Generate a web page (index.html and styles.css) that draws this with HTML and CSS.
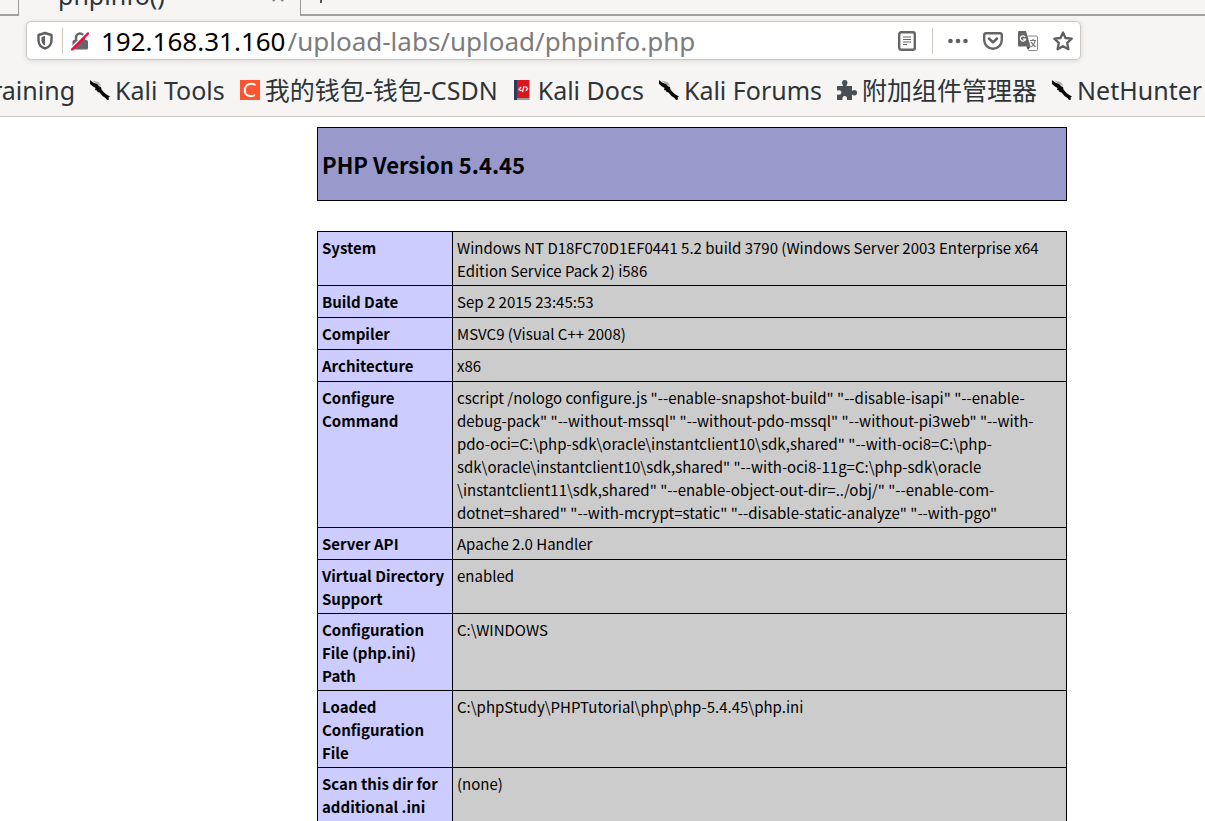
FILE: index.html
```html
<!DOCTYPE html>
<html lang="en">
<head>
<meta charset="utf-8">
<title>phpinfo()</title>
<link rel="stylesheet" href="styles.css">
</head>
<body>
<svg class="defs" aria-hidden="true">
  <symbol id="kali" viewBox="0 0 20 20">
    <path fill="#b5b5b5" d="M2 0.500 9 2 11.500 6 8 5Z"/>
    <path fill="#080808" d="M0 0 3 2.500 7 4 9.500 6.500 11 7 11.500 9.500 14 12.500 16.500 14.500 20 16.500 18.500 17.500 19 19.500 17 20 15.500 18 12.500 16 9.500 12.500 7.500 12 7 10.500 5 10 5.500 8 3 6.500 0 4Z"/>
  </symbol>
</svg>
<header class="browser">
  <div class="tabs">
    <div class="tab-edge"></div>
    <div class="tab"><span>phpinfo()</span>
      <button class="tab-close" aria-label="Close tab"><svg width="12" height="12" viewBox="0 0 12 12"><path d="M1 1 11 11M11 1 1 11" stroke="#777" stroke-width="2"/></svg></button>
    </div>
    <div class="tab-rest"><button class="tab-new" aria-label="New tab"><svg width="16" height="16" viewBox="0 0 16 16"><path d="M8 0V16M0 8H16" stroke="#555" stroke-width="2"/></svg></button></div>
  </div>
  <div class="urlbar">
    <button aria-label="Tracking protection"><svg width="18" height="20" viewBox="0 0 18 20"><path d="M9 2 15.500 4V9C15.500 13.500 12.500 16.500 9 17.500 5.500 16.500 2.500 13.500 2.500 9V4Z" fill="none" stroke="#5f5f5f" stroke-width="2.400" stroke-linejoin="round"/><path d="M9 5 5.500 6V9.500C5.500 12 7 13.500 9 14.500Z" fill="#5f5f5f"/></svg></button>
    <span class="divider"></span>
    <button aria-label="Connection is not secure"><svg width="18" height="20" viewBox="0 0 18 20"><path d="M5 10V6.500A4 4 0 0 1 13 6.500V10" fill="none" stroke="#666" stroke-width="2.500"/><rect x="1.500" y="9" width="15.500" height="9.500" rx="1.500" fill="#666"/><path d="M0 17.500 15.500 2" stroke="#fff" stroke-width="2"/><path d="M1 18.500 17 2.500" stroke="#ff0039" stroke-width="2.400" stroke-linecap="round"/></svg></button>
    <label class="host" for="url">192.168.31.160</label>
    <input id="url" class="path" type="text" value="/upload-labs/upload/phpinfo.php">
    <div class="actions">
      <button aria-label="Reader view"><svg width="20" height="22" viewBox="0 0 20 22"><rect x="2.200" y="2.200" width="15.600" height="17.600" rx="2" fill="none" stroke="#666" stroke-width="2.400"/><path d="M6 7H14M6 9.500H14M6 12H14M6 14.500H10" stroke="#666" stroke-width="1.200"/></svg></button>
      <span class="divider"></span>
      <button aria-label="Page actions"><svg width="20" height="20" viewBox="0 0 20 20"><g fill="#5f5f5f"><circle cx="2.500" cy="10" r="2.300"/><circle cx="10" cy="10" r="2.300"/><circle cx="17.500" cy="10" r="2.300"/></g></svg></button>
      <button aria-label="Save to Pocket"><svg width="20" height="20" viewBox="0 0 20 20"><path d="M3 2.200H17Q18.800 2.200 18.800 4V9A8.800 8.800 0 0 1 1.200 9V4Q1.200 2.200 3 2.200Z" fill="none" stroke="#666" stroke-width="2.400"/><path d="M6 7.500 10 11.300 14 7.500" fill="none" stroke="#5f5f5f" stroke-width="2.500" stroke-linecap="round" stroke-linejoin="round"/></svg></button>
      <button aria-label="Translate page"><svg width="20" height="20" viewBox="0 0 20 20"><path d="M9.500 5H18.500Q19.500 5 19.500 6V18.500Q19.500 19.500 18.500 19.500H10.500" fill="#fff" stroke="#888"/><path d="M12 9.500H18M15 8V9.500M13 11 17.500 16M17 10C16.500 13 15 15 12.500 16" fill="none" stroke="#777" stroke-width="1.200"/><path d="M1 0H8L12.500 15.500H1Q0 15.500 0 14.500V1Q0 0 1 0Z" fill="#666"/><path d="M8.500 15.500H12.500L10 19Z" fill="#444"/><path d="M7.200 6A2.600 2.600 0 1 0 7.500 8.200H5" fill="none" stroke="#fff" stroke-width="1.300"/></svg></button>
      <button aria-label="Bookmark this page"><svg width="20" height="20" viewBox="0 0 20 20"><path d="M10 1.500 12.500 7 18.700 7.700 14.200 11.900 15.400 18.200 10 15.200 4.600 18.200 5.800 11.900 1.300 7.700 7.500 7Z" fill="none" stroke="#5f5f5f" stroke-width="2.300" stroke-linejoin="round"/></svg></button>
    </div>
  </div>
  <nav class="bookmarks" aria-label="Bookmarks">
    <a href="#">raining</a>
    <a href="#"><svg width="20" height="20"><use href="#kali"/></svg>Kali Tools</a>
    <a href="#"><svg width="20" height="20" viewBox="0 0 20 20"><path fill="#fc5531" d="M0 0H20V20H0Z"/><path d="M15.500 5C11 2.500 5 4 4.800 10.500 5 16.500 11 17 15 15.200" fill="none" stroke="#fff" stroke-width="2"/></svg>我的钱包-钱包-CSDN</a>
    <a href="#"><svg width="20" height="20" viewBox="0 0 20 20"><path fill="#293a61" d="M1 0H5V20H1Z"/><path fill="#d9161b" d="M4 0H16.500V18H4Z"/><path fill="#999" d="M4 18H16.500V20H4Z"/><path d="M8 7 6 9.500 8.500 11M12.500 6.500 14.500 8.500 13 11M11 6 9.500 12" fill="none" stroke="#fff" stroke-width="1.300"/></svg>Kali Docs</a>
    <a href="#"><svg width="20" height="20"><use href="#kali"/></svg>Kali Forums</a>
    <a href="#"><svg width="20" height="20" viewBox="0 0 20 20"><path fill="#474f52" d="M0 6H6Q5.500 4.500 5 3 5 0 7.700 0 10.500 0 10.500 3 10 4.500 9.500 6H15V11Q16 10 17.500 10 20 10 20 12.800 20 15.500 17.500 15.500 16 15.500 15 14.500V20H10Q10.500 16 7.700 16 5 16 5.500 20H0V14.500Q4.500 15.500 4.500 12.500 4.500 9.500 0 10.500Z"/></svg>附加组件管理器</a>
    <a href="#"><svg width="20" height="20"><use href="#kali"/></svg>NetHunter</a>
  </nav>
</header>
<main class="page">
  <div class="content">
    <div class="banner"><h1>PHP Version 5.4.45</h1></div>
    <table class="info">
      <tbody>
      <tr><th scope="row">System</th><td>Windows NT D18FC70D1EF0441 5.2 build 3790 (Windows Server 2003 Enterprise x64 Edition Service Pack 2) i586</td></tr>
      <tr><th scope="row">Build Date</th><td>Sep 2 2015 23:45:53</td></tr>
      <tr><th scope="row">Compiler</th><td>MSVC9 (Visual C++ 2008)</td></tr>
      <tr><th scope="row">Architecture</th><td>x86</td></tr>
      <tr><th scope="row">Configure Command</th><td>cscript /nologo configure.js "--enable-snapshot-build" "--disable-isapi" "--enable-<br>debug-pack" "--without-mssql" "--without-pdo-mssql" "--without-pi3web" "--with-<br>pdo-oci=C:\php-sdk\oracle\instantclient10\sdk,shared" "--with-oci8=C:\php-<br>sdk\oracle\instantclient10\sdk,shared" "--with-oci8-11g=C:\php-sdk\oracle<br>\instantclient11\sdk,shared" "--enable-object-out-dir=../obj/" "--enable-com-<br>dotnet=shared" "--with-mcrypt=static" "--disable-static-analyze" "--with-pgo"</td></tr>
      <tr><th scope="row">Server API</th><td>Apache 2.0 Handler</td></tr>
      <tr><th scope="row">Virtual Directory Support</th><td>enabled</td></tr>
      <tr><th scope="row">Configuration File (php.ini) Path</th><td>C:\WINDOWS</td></tr>
      <tr><th scope="row">Loaded Configuration File</th><td>C:\phpStudy\PHPTutorial\php\php-5.4.45\php.ini</td></tr>
      <tr><th scope="row">Scan this dir for additional .ini files</th><td>(none)</td></tr>
      </tbody>
    </table>
  </div>
</main>
</body>
</html>
```
FILE: styles.css
```css
* { box-sizing: border-box; }
html, body { height: 100%; }
body {
  margin: 0;
  display: flex;
  flex-direction: column;
  overflow: hidden;
  background: #fff;
  color: #000;
  font-family: "Noto Sans", "Noto Sans CJK SC", sans-serif;
}
.defs { position: absolute; width: 0; height: 0; }
svg { display: block; flex: none; }
button { border: 0; padding: 0; background: none; }

.browser {
  flex: none;
  background: #f6f5f4;
  color: #2e3436;
  border-bottom: 1px solid #cdc7c2;
  font-size: 25px;
}
.tabs { display: flex; height: 16px; overflow: hidden; }
.tab-edge { width: 19px; border-right: 1px solid #999; border-bottom: 2px solid #a3a19e; }
.tab {
  width: 281px;
  display: flex;
  align-items: flex-end;
  justify-content: space-between;
  padding: 0 16px 4px 39px;
  line-height: 34px;
}
.tab-close { padding-bottom: 10px; }
.tab-rest {
  flex: 1;
  display: flex;
  align-items: flex-end;
  padding: 0 12px 11px;
  border-left: 1px solid #999;
  border-bottom: 2px solid #a3a19e;
}

.urlbar {
  display: flex;
  align-items: center;
  height: 39px;
  margin: 5px 124px 0 26px;
  padding: 0 7px 0 9px;
  background: #fff;
  border: 1px solid #cdc7c2;
  border-radius: 5px;
  box-shadow: 0 1px 5px rgba(0, 0, 0, 0.12);
  font-size: 26px;
}
.divider { width: 1px; height: 26px; margin: 0 8px; background: #cdc7c2; }
.host { margin-left: 12px; color: #000; }
.path {
  flex: 1;
  min-width: 0;
  border: 0;
  padding: 0 0 0 2px;
  background: none;
  outline: 0;
  font: inherit;
  color: #7c7c7c;
}
.actions { display: flex; align-items: center; gap: 15px; }
.actions .divider { margin: 0; }

.bookmarks {
  display: flex;
  align-items: center;
  gap: 15px;
  height: 56px;
  margin-left: -8px;
  padding-top: 4px;
  white-space: nowrap;
}
.bookmarks a {
  display: flex;
  align-items: center;
  gap: 5px;
  line-height: 36px;
  color: inherit;
  text-decoration: none;
}

.page {
  flex: 1;
  min-height: 0;
  overflow: hidden;
  padding: 10px 0 0 179px;
  font-family: "Noto Sans CJK SC", sans-serif;
  font-size: 15px;
  line-height: 23px;
}
.content { max-width: 750px; margin: 0 auto; }
.banner {
  padding: 19px 4px;
  margin-bottom: 30px;
  background: #9999cc;
  border: 1px solid #000;
}
h1 { margin: 0; font-size: 22px; line-height: 34px; }
.info { width: 100%; border-collapse: collapse; }
.info tr { height: 32px; }
.info th, .info td {
  padding: 4px 4px 3px;
  border: 1px solid #000;
  text-align: left;
  vertical-align: top;
}
.info th { width: 135px; background: #ccccff; }
.info td { background: #cccccc; }
```
